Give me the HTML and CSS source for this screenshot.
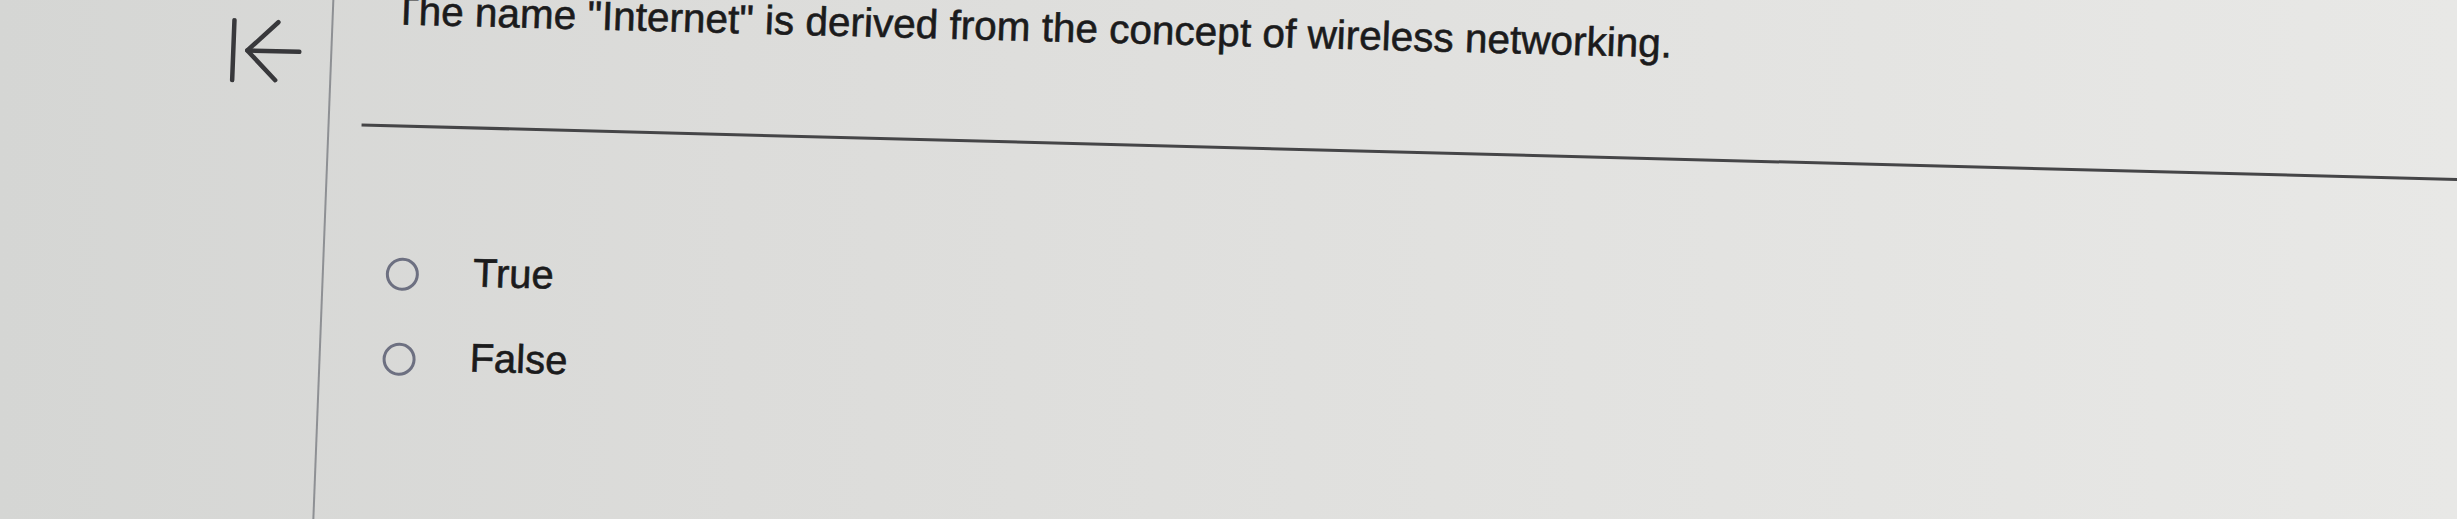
FILE: index.html
```html
<!DOCTYPE html>
<html lang="en">
<head>
    <meta charset="UTF-8">
    <meta name="viewport" content="width=device-width, initial-scale=1.0">
    <title>Question</title>
    <link rel="stylesheet" href="styles.css">
</head>
<body>

<div class="screen">
    <aside class="sidebar">
        <button class="collapse-btn" type="button" aria-label="Collapse">
            <svg width="74" height="66" viewBox="0 0 74 66">
                <line x1="4" y1="2" x2="4" y2="62"/>
                <line x1="18" y1="32" x2="70" y2="32"/>
                <polyline points="48,3 18,32 47,61"/>
            </svg>
        </button>
    </aside>

    <main class="question">
        <p class="question-text">The name "Internet" is derived from the concept of wireless networking.</p>
        <hr class="question-rule">

        <ul class="options">
            <li class="option"><span class="radio"></span><span class="label">True</span></li>
            <li class="option"><span class="radio"></span><span class="label">False</span></li>
        </ul>
    </main>
</div>

</body>
</html>
```

FILE: styles.css
```css
html, body {
    margin: 0;
    padding: 0;
    height: 100%;
    overflow: hidden;
}
body {
    font-family: "Liberation Sans", Arial, sans-serif;
    color: #1b1b1c;
    background: linear-gradient(to right, #d5d6d4 0%, #dcdcda 30%, #e3e3e1 70%, #e8e8e6 100%);
}
/* whole panel sits slightly tilted */
.screen {
    display: flex;
    width: 2560px;
    height: 640px;
    margin-top: -60px;
    transform-origin: 0 60px;
    transform: matrix(1, 0.026, -0.0385, 1, 0, 0);
}
.sidebar {
    width: 334px;
    flex-shrink: 0;
    border-right: 2px solid #8e9094;
    padding-top: 72px;
    box-sizing: border-box;
    padding-left: 231px;
}
.collapse-btn {
    background: none;
    border: none;
    padding: 0;
    display: block;
}
.collapse-btn svg {
    display: block;
    fill: none;
    stroke: #38383b;
    stroke-width: 4.5;
    stroke-linecap: round;
    stroke-linejoin: round;
}
.question {
    flex: 1;
    padding-top: 40px;
}
.question-text {
    margin: 0 0 0 60px;
    font-size: 40.5px;
    line-height: 40.5px;
    white-space: nowrap;
    -webkit-text-stroke: 0.6px #1b1b1c;
}
.question-rule {
    margin: 93px 0 0 32px;
    border: none;
    height: 3px;
    background: #454547;
}
.options {
    list-style: none;
    margin: 119px 0 0 0;
    padding: 0 0 0 62px;
    display: flex;
    flex-direction: column;
    gap: 37px;
}
.option {
    display: flex;
    align-items: center;
    height: 48px;
}
.radio {
    width: 27px;
    height: 27px;
    margin-top: 8px;
    border: 3.5px solid #6d7081;
    border-radius: 50%;
    flex-shrink: 0;
}
.label {
    margin-left: 54px;
    font-size: 40px;
    line-height: 48px;
    -webkit-text-stroke: 0.6px #1b1b1c;
}
```
